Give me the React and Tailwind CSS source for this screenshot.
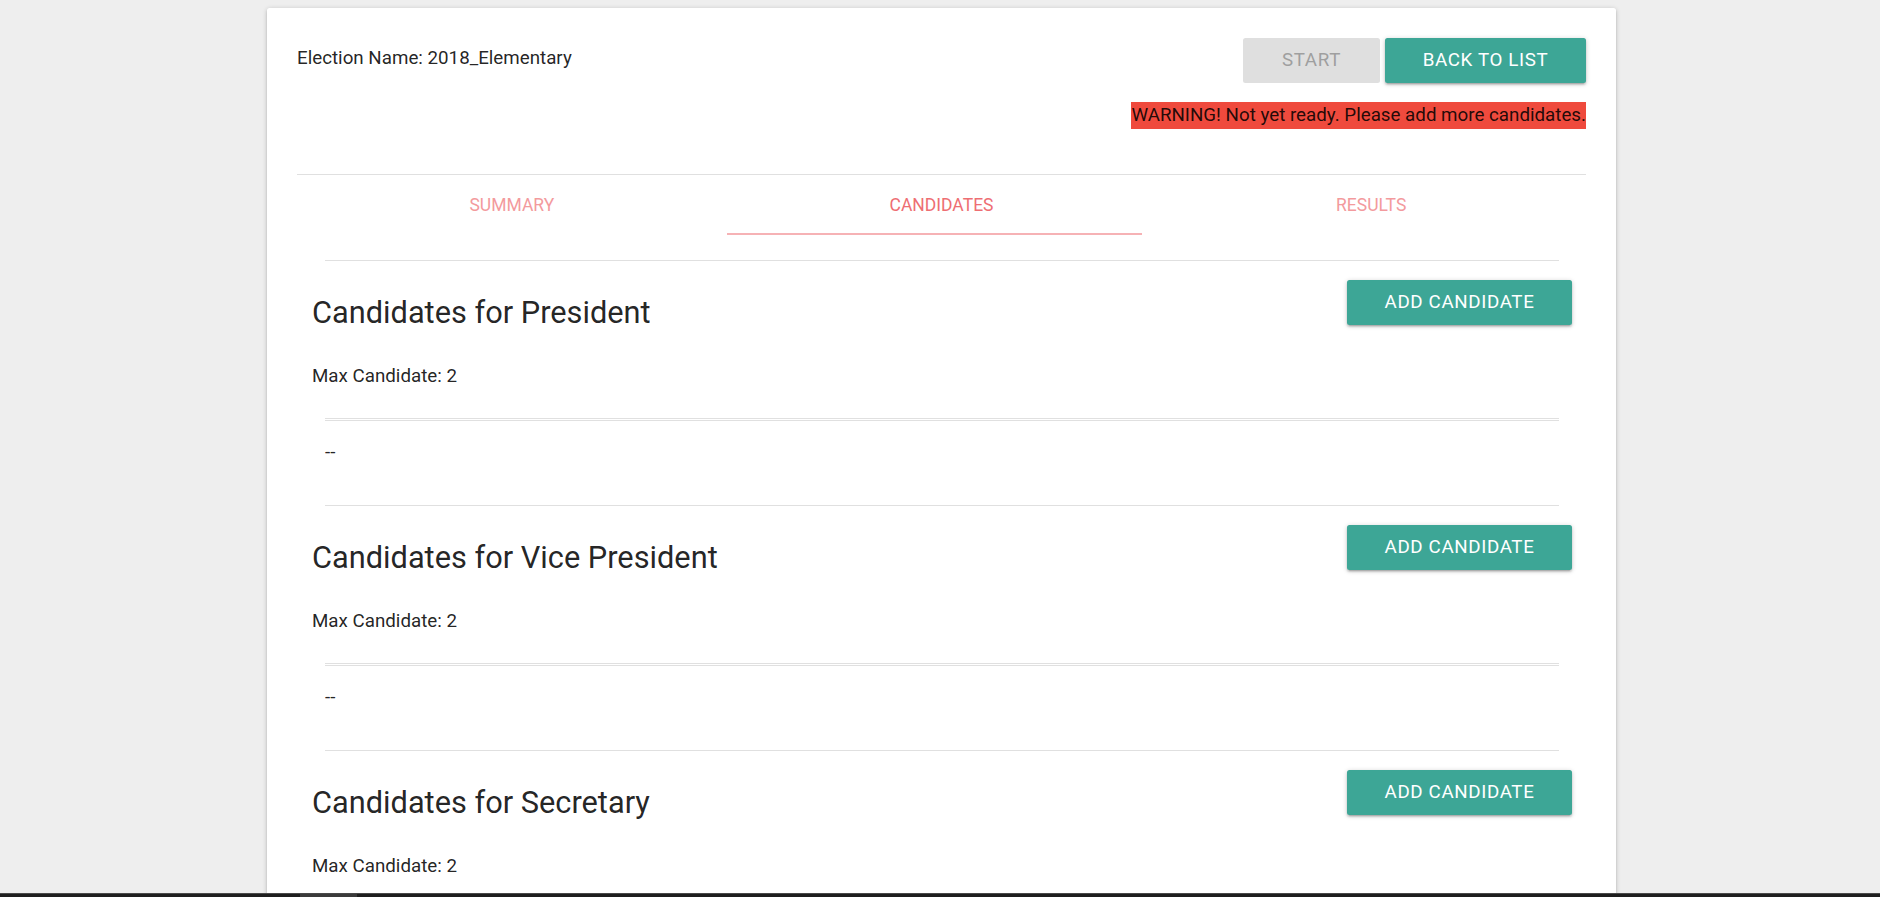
import React from "react";

const positions = ["President", "Vice President", "Secretary"];

function Section({ title }) {
  return (
    <div>
      <div className="mx-[13px] h-px bg-[#e0e0e0]" />
      <div className="flex items-start justify-between">
        <div>
          <h5 className="mt-[35px] text-[30.75px] leading-[34px] font-normal text-[rgba(0,0,0,0.87)]">
            Candidates for {title}
          </h5>
          <p className="mt-[32px] text-[18.75px] leading-[28px] text-[rgba(0,0,0,0.87)]">
            Max Candidate: 2
          </p>
        </div>
        <button className="mt-[19px] h-[45px] w-[225px] rounded-[2.5px] bg-[#3da696] text-[18.75px] uppercase tracking-[0.625px] text-white shadow-[0_2px_2px_0_rgba(0,0,0,0.14),0_3px_1px_-2px_rgba(0,0,0,0.12),0_1px_5px_0_rgba(0,0,0,0.2)]">
          Add Candidate
        </button>
      </div>
      <div className="mx-[13px] mt-[28px] h-[3px] border-y border-[#e0e0e0]" />
      <p className="mx-[13px] mt-[17px] mb-[39px] text-[18.75px] leading-[28px] text-[rgba(0,0,0,0.87)]">
        --
      </p>
    </div>
  );
}

export default function App() {
  const tabs = ["Summary", "Candidates", "Results"];
  return (
    <div className="min-h-screen bg-[#eeeeee] pt-[8px] font-[family-name:Roboto,sans-serif]">
      <div className="ml-[267px] w-[1349px] rounded-[2.5px] bg-white px-[30px] pt-[30px] pb-[30px] shadow-[0_2px_2px_0_rgba(0,0,0,0.14),0_3px_1px_-2px_rgba(0,0,0,0.12),0_1px_5px_0_rgba(0,0,0,0.2)]">
        <div className="flex items-start justify-between">
          <p className="pt-[6px] text-[18.75px] leading-[28px] text-[rgba(0,0,0,0.87)]">
            Election Name: 2018_Elementary
          </p>
          <div className="flex flex-col items-end">
            <div className="flex gap-[5px]">
              <button className="h-[45px] w-[137px] rounded-[2.5px] bg-[#dfdfdf] text-[18.75px] uppercase tracking-[0.625px] text-[#9f9f9f]">
                Start
              </button>
              <button className="h-[45px] w-[201px] rounded-[2.5px] bg-[#3da696] text-[18.75px] uppercase tracking-[0.625px] text-white shadow-[0_2px_2px_0_rgba(0,0,0,0.14),0_3px_1px_-2px_rgba(0,0,0,0.12),0_1px_5px_0_rgba(0,0,0,0.2)]">
                Back to List
              </button>
            </div>
            <span className="mt-[19px] inline-block h-[27px] bg-[#ef4a3d] text-[18.75px] leading-[27px] text-[rgba(0,0,0,0.87)]">
              WARNING! Not yet ready. Please add more candidates.
            </span>
          </div>
        </div>

        <div className="mt-[45px] h-px bg-[#e0e0e0]" />

        <div className="flex h-[60px]">
          {tabs.map((t, i) => (
            <div key={t} className="relative flex flex-1 items-center justify-center">
              <span
                className={
                  i === 1
                    ? "text-[17.5px] uppercase text-[#ee6e73]"
                    : "text-[17.5px] uppercase text-[#f39a9d]"
                }
              >
                {t}
              </span>
              {i === 1 && (
                <div className="absolute bottom-0 left-0 h-[2.5px] w-[415px] bg-[#f6b2b5]" />
              )}
            </div>
          ))}
        </div>

        <div className="mt-[25px] pl-[15px] pr-[14px]">
          {positions.map((p) => (
            <Section key={p} title={p} />
          ))}
        </div>
      </div>

      <div className="fixed bottom-0 left-0 right-0 flex h-[4px] border-t border-[#4a4a4a] bg-[#1e1e1e]">
        <div className="ml-[300px] w-[57px] bg-[#3a3a3a]" />
      </div>
    </div>
  );
}
